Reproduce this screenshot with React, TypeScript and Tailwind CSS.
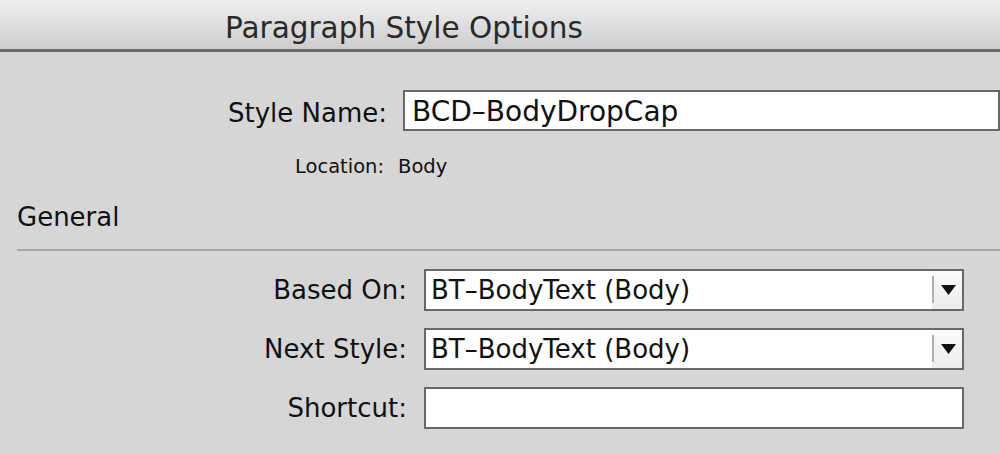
import React from 'react';

const font = { fontFamily: '"DejaVu Sans", "Liberation Sans", sans-serif' };

function DropSelect({ value }: { value: string }) {
  return (
    <div className="flex h-[42px] w-[540px] items-stretch border-2 border-[#686868] bg-white">
      <div className="flex flex-1 items-center pl-[5px] text-[26px] text-[#111] leading-none">{value}</div>
      <div className="flex w-[30px] items-center justify-center bg-gradient-to-b from-[#fafafa] to-[#ececec] relative">
        <span className="absolute left-0 top-[5px] bottom-[6px] w-[2px] bg-[#b0b0b0]" />
        <svg width="15" height="10" viewBox="0 0 15 10" className="ml-[3px]">
          <polygon points="0,0 15,0 7.5,10" fill="#111" />
        </svg>
      </div>
    </div>
  );
}

export default function App() {
  return (
    <div className="w-[1000px] h-[454px] overflow-hidden bg-[#d6d6d6]" style={font}>
      {/* Title bar */}
      <header className="h-[52px] border-b-[3px] border-[#6b6b6b] bg-gradient-to-b from-[#f0f0f0] to-[#cdcdcd] flex items-center pl-[225px]">
        <h1 className="text-[29.5px] text-[#2a2a2a] leading-none pt-[8px]">Paragraph Style Options</h1>
      </header>

      {/* Style name */}
      <div className="flex items-center mt-[38px] gap-[16px]">
        <div className="w-[387px] text-right text-[26px] text-[#111] leading-none pt-[4px]">Style Name:</div>
        <div className="flex-1 h-[41px] border-2 border-[#686868] bg-white flex items-center pl-[7px] text-[28px] text-[#111] leading-none pt-[3px]">
          BCD–BodyDropCap
        </div>
      </div>

      <div className="flex pl-[295px] mt-[26px] text-[19.5px] text-[#111] leading-none">
        <span>Location:</span>
        <span className="ml-[14px]">Body</span>
      </div>

      <div className="pl-[17px] mt-[27px] text-[26px] text-[#111] leading-none">General</div>

      <div className="ml-[17px] mt-[19px] h-[2px] bg-[#a6a6a6]" />

      {/* General fields */}
      <div className="flex flex-col gap-[17px] mt-[18px]">
        <div className="flex items-center gap-[17px]">
          <div className="w-[407px] text-right text-[26px] text-[#111] leading-none">Based On:</div>
          <DropSelect value="BT–BodyText (Body)" />
        </div>
        <div className="flex items-center gap-[17px]">
          <div className="w-[407px] text-right text-[26px] text-[#111] leading-none">Next Style:</div>
          <DropSelect value="BT–BodyText (Body)" />
        </div>
        <div className="flex items-center gap-[17px]">
          <div className="w-[407px] text-right text-[26px] text-[#111] leading-none">Shortcut:</div>
          <div className="h-[42px] w-[540px] border-2 border-[#686868] bg-white" />
        </div>
      </div>
    </div>
  );
}
